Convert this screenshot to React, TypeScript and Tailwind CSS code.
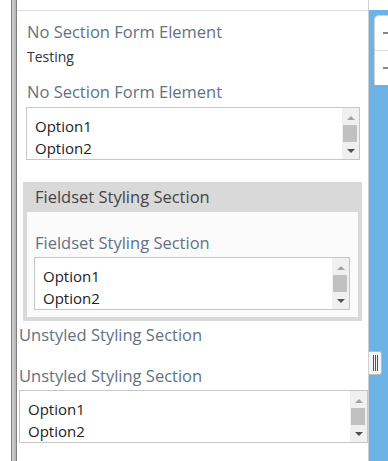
import React from "react";

const font = { fontFamily: '"Open Sans", "Noto Sans", sans-serif' };

function FakeListbox({ className = "" }: { className?: string }) {
  return (
    <div className={`flex h-[53px] border border-[#c6c6c6] bg-white ${className}`}>
      <div className="flex-1 pl-[8px] pt-[7px] text-[15px] leading-[22px] text-[#222]">
        <div>Option1</div>
        <div>Option2</div>
      </div>
      <div className="relative w-[17px] bg-[#f0f0f0]">
        <div className="absolute left-[5px] top-[8px] h-0 w-0 border-x-[4px] border-b-[4px] border-x-transparent border-b-[#a3a3a3]" />
        <div className="absolute left-[1px] top-[17px] h-[17px] w-[14px] bg-[#c1c1c1]" />
        <div className="absolute left-[5px] top-[41px] h-0 w-0 border-x-[4px] border-t-[4px] border-x-transparent border-t-[#505050]" />
      </div>
    </div>
  );
}

export default function App() {
  return (
    <div className="flex h-[461px] w-[388px] overflow-hidden bg-white" style={font}>
      {/* left splitter */}
      <div className="ml-[11px] w-[6px] border-x border-[#7f7f7f] bg-gradient-to-r from-[#d2d2d2] to-[#b3b3b3]" />

      {/* main column */}
      <div className="flex w-[352px] flex-col border-r border-[#cfcfcf]">
        <div className="h-[11px] border-b border-[#dedede]" />

        <div className="pl-[10px] pr-[8px]">
          <div className="mt-[10px] text-[16.5px] leading-[22px] text-[#627282]">No Section Form Element</div>
          <div className="mt-[4px] text-[14px] leading-[20px] text-[#333]">Testing</div>
          <div className="mt-[14px] text-[16.5px] leading-[22px] text-[#627282]">No Section Form Element</div>
          <FakeListbox className="mt-[4px] -ml-[1px]" />
        </div>

        <div className="ml-[6px] mr-[6px] mt-[22px] flex flex-col">
          <div className="h-[30px] bg-[#d9d9d9] pl-[12px] text-[16.5px] leading-[30px] text-[#444]">
            Fieldset Styling Section
          </div>
          <div className="border-x-4 border-b-4 border-[#d9d9d9] bg-[#fbfbfb] pb-[7px] pl-[7px] pr-[8px]">
            <div className="mt-[20px] pl-[1px] text-[16.5px] leading-[22px] text-[#627282]">Fieldset Styling Section</div>
            <FakeListbox className="mt-[3px]" />
          </div>
        </div>

        <div className="pl-[2px]">
          <div className="mt-[3px] text-[16.5px] leading-[22px] text-[#627282]">Unstyled Styling Section</div>
          <div className="mt-[19px] text-[16.5px] leading-[22px] text-[#627282]">Unstyled Styling Section</div>
          <FakeListbox className="mt-[3px]" />
        </div>
      </div>

      {/* right side panel */}
      <div className="flex flex-1 flex-col">
        <div className="h-[10px] bg-white" />
        <div className="relative flex-1 bg-[#6db3e6]">
          <div className="ml-[5px] mt-[5px] h-[70px] rounded-tl-[5px] border-l border-t border-[#d0d0d0] bg-white">
            <div className="flex h-[35px] items-center justify-end border-b border-[#dcdcdc]">
              <div className="h-[2px] w-[5px] bg-[#888]" />
            </div>
            <div className="flex h-[34px] items-center justify-end">
              <div className="h-[2px] w-[5px] bg-[#888]" />
            </div>
          </div>
          <div className="absolute left-0 top-[341px] flex h-[24px] w-[13px] items-center justify-center gap-[1px] rounded-r-[3px] border border-l-0 border-[#bcbcbc] bg-[#f4f4f4]">
            <div className="h-[16px] w-[1px] bg-[#555]" />
            <div className="h-[16px] w-[1px] bg-[#555]" />
            <div className="h-[16px] w-[1px] bg-[#555]" />
          </div>
        </div>
      </div>
    </div>
  );
}
